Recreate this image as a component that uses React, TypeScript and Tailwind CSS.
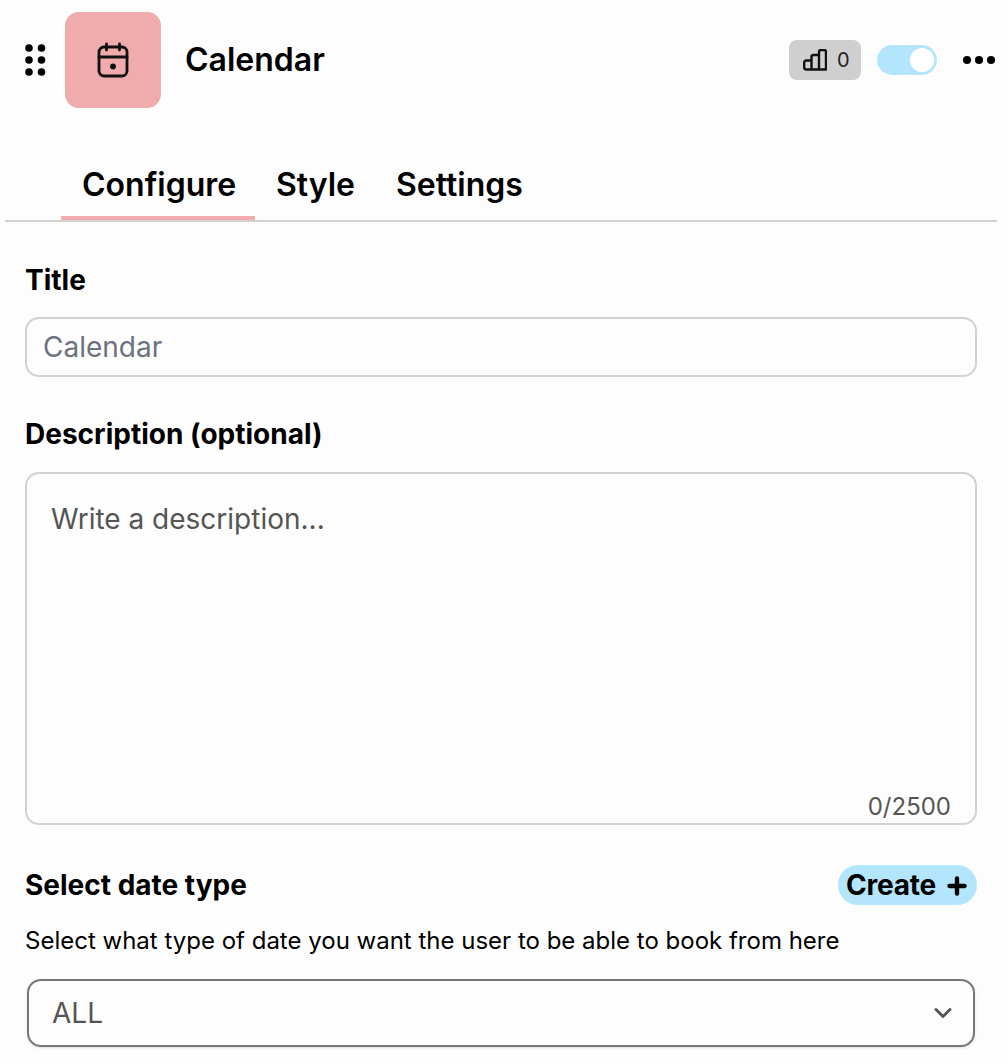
import { ChevronDown, Plus } from 'lucide-react';

function GripIcon() {
  return (
    <svg width="21" height="32" viewBox="0 0 21 32" fill="#000">
      <circle cx="4" cy="4" r="3.8" />
      <circle cx="16.5" cy="4" r="3.8" />
      <circle cx="4" cy="16" r="3.8" />
      <circle cx="16.5" cy="16" r="3.8" />
      <circle cx="4" cy="28" r="3.8" />
      <circle cx="16.5" cy="28" r="3.8" />
    </svg>
  );
}

function CalendarIcon() {
  return (
    <svg width="32" height="36" viewBox="0 0 32 36" fill="none" stroke="#111" strokeWidth="2.8" strokeLinecap="round" strokeLinejoin="round">
      <rect x="2" y="5" width="28" height="29" rx="5" />
      <path d="M2 15h28M9.500 2v6M22.500 2v6" />
      <circle cx="16" cy="24.500" r="2.900" fill="#111" stroke="none" />
    </svg>
  );
}

function BarsIcon() {
  return (
    <svg width="24" height="22" viewBox="0 0 24 22" fill="none" stroke="#111" strokeWidth="2.400" strokeLinejoin="round">
      <path d="M8.500 20.500H3a2 2 0 0 1-1.800-2v-5a2 2 0 0 1 2-2h5.300zM8.500 20.500V8a2 2 0 0 1 2-2h5.500v14.500zM16 20.500V3a2 2 0 0 1 2-2h3a2 2 0 0 1 2 2v17.500z" />
    </svg>
  );
}

function App() {
  return (
    <div className="min-h-screen w-[1008px] bg-[#fdfdfd] text-black font-['Inter',sans-serif]">
      <header className="flex items-center pt-3 pl-[25px] pr-[13px]">
        <GripIcon />
        <div className="ml-[19px] flex h-24 w-24 items-center justify-center rounded-[14px] bg-[#f0acac]">
          <CalendarIcon />
        </div>
        <h1 className="ml-6 text-[32px] font-semibold">Calendar</h1>
        <div className="ml-auto flex items-center">
          <div className="flex h-10 w-[72px] items-center gap-[10px] rounded-lg bg-[#cfcfcf] pl-[14px] text-xl">
            <BarsIcon />
            <span className="text-[#222]">0</span>
          </div>
          <div className="ml-4 flex h-[30px] w-[60px] items-center justify-end rounded-full bg-[#b3e6fd] pr-[3px]">
            <div className="h-6 w-6 rounded-full bg-white" />
          </div>
          <div className="ml-[26px] flex gap-1">
            <span className="h-2 w-2 rounded-full bg-black" />
            <span className="h-2 w-2 rounded-full bg-black" />
            <span className="h-2 w-2 rounded-full bg-black" />
          </div>
        </div>
      </header>

      <nav className="ml-[5px] mr-[11px] mt-[34px] flex border-b-2 border-[#d2d2d2] pl-14 text-[32px] font-semibold leading-[39px]">
        <button className="flex h-[78px] w-[194px] items-center border-b-4 border-[#f0acac] pl-[21px] pt-[10px]">Configure</button>
        <button className="flex h-[78px] items-center border-b-4 border-transparent pl-[21px] pt-[10px]">Style</button>
        <button className="flex h-[78px] items-center border-b-4 border-transparent pl-[41px] pt-[10px]">Settings</button>
      </nav>

      <main className="px-[25px] pr-[31px]">
        <label className="mt-[41px] block text-[28px] font-bold leading-[34px]">Title</label>
        <input
          readOnly
          placeholder="Calendar"
          className="mt-5 block h-[60px] w-full rounded-[14px] border-2 border-[#d2d2d2] bg-transparent px-4 text-[28px] outline-none placeholder:text-[#6b7280]"
        />

        <label className="mt-10 block text-[28px] font-bold leading-[34px]">Description (optional)</label>
        <div className="relative mt-[21px] h-[353px] rounded-[14px] border-2 border-[#d2d2d2] px-6 pt-[25px] text-[28px] leading-[40px] text-[#555]">
          Write a description...
          <span className="absolute bottom-px right-6 text-2xl leading-[30px]">0/2500</span>
        </div>

        <div className="mt-10 flex items-center justify-between">
          <span className="text-[28px] font-bold leading-[34px]">Select date type</span>
          <button className="flex h-10 w-[139px] items-center gap-2 rounded-[20px] bg-[#b3e6fd] pl-2 text-[28px] font-bold tracking-[-0.2px]">
            Create <Plus className="mt-0.5" size={26} strokeWidth={4} />
          </button>
        </div>
        <p className="mt-5 text-2xl leading-[32px]">Select what type of date you want the user to be able to book from here</p>
        <div className="mx-0.5 mt-[22px] flex h-[68px] items-center justify-between rounded-[14px] border-2 border-[#777] pl-[23px] pr-4 text-[28px] text-[#555] shadow-sm">
          ALL
          <ChevronDown size={28} strokeWidth={2.500} />
        </div>
      </main>
    </div>
  );
}

export default App;
